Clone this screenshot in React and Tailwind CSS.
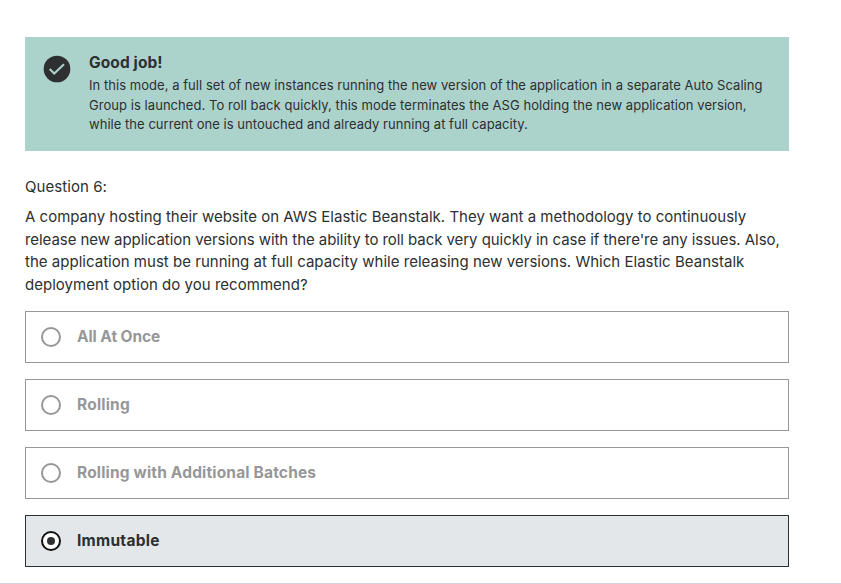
const feedback = [
  { text: "In this mode, a full set of new instances running the new version of the application in a separate Auto Scaling", tracking: "tracking-[0.045px]" },
  { text: "Group is launched. To roll back quickly, this mode terminates the ASG holding the new application version,", tracking: "tracking-[0.05px]" },
  { text: "while the current one is untouched and already running at full capacity.", tracking: "tracking-[0.035px]" },
];

const prompt = [
  { text: "A company hosting their website on AWS Elastic Beanstalk. They want a methodology to continuously", tracking: "tracking-normal" },
  { text: "release new application versions with the ability to roll back very quickly in case if there're any issues. Also,", tracking: "tracking-[-0.06px]" },
  { text: "the application must be running at full capacity while releasing new versions. Which Elastic Beanstalk", tracking: "tracking-[0.02px]" },
  { text: "deployment option do you recommend?", tracking: "tracking-[0.03px]" },
];

const options = [
  { text: "All At Once", tracking: "tracking-[-0.08px]" },
  { text: "Rolling", tracking: "tracking-[0.2px]" },
  { text: "Rolling with Additional Batches", tracking: "tracking-[0.17px]" },
  { text: "Immutable", tracking: "tracking-[0.27px]", selected: true },
];

function CheckCircle() {
  return (
    <svg viewBox="0 0 32 32" className="size-8 shrink-0" aria-hidden="true">
      <circle cx="16" cy="16" r="13.33" fill="#2d2f31" />
      <path d="M8.7 16l4.5 4.5 9.8-9.3" fill="none" stroke="#acd2cc" strokeWidth="2.1" />
    </svg>
  );
}

function Lines({ lines }) {
  return lines.map(({ text, tracking }) => (
    <span key={text} className={`block whitespace-nowrap ${tracking}`}>{text}</span>
  ));
}

function Option({ text, tracking, selected }) {
  return (
    <li className={`flex h-[52px] items-center gap-4 border px-[15px] ${selected ? "border-[#2d2f31] bg-[#e3e7ea] text-[#2d2f31]" : "border-[#969798] bg-white text-[#969798]"}`}>
      <span className={`flex size-5 shrink-0 items-center justify-center rounded-full border-2 bg-white ${selected ? "border-[#111111]" : "border-[#969798]"}`}>
        {selected && <span className="size-2 rounded-full bg-[#2d2f31]" />}
      </span>
      <span className={`text-[15.5px] leading-[22px] font-bold ${tracking}`}>{text}</span>
    </li>
  );
}

export default function App() {
  return (
    <div className="flex h-[584px] w-[841px] flex-col overflow-hidden border-b border-[#d1d2e0] bg-white pt-[37px] pl-[25px] font-['Inter',sans-serif] text-[15px] text-[#2d2f31]">
      <main className="w-[764px]">
        <section className="flex h-[114px] gap-4 bg-[#acd2cc] p-4">
          <CheckCircle />
          <div>
            <h2 className="mb-1 text-[15.5px] leading-[19.2px] font-bold tracking-[0.1px]">Good job!</h2>
            <p className="text-[13px] leading-[19.6px]"><Lines lines={feedback} /></p>
          </div>
        </section>
        <div className="mt-[25px] leading-[22.4px] tracking-[0.06px]">Question 6:</div>
        <p className="mt-2 mb-[14.6px] leading-[22.5px]"><Lines lines={prompt} /></p>
        <ul className="flex flex-col gap-4">
          {options.map((option) => <Option key={option.text} {...option} />)}
        </ul>
      </main>
    </div>
  );
}
